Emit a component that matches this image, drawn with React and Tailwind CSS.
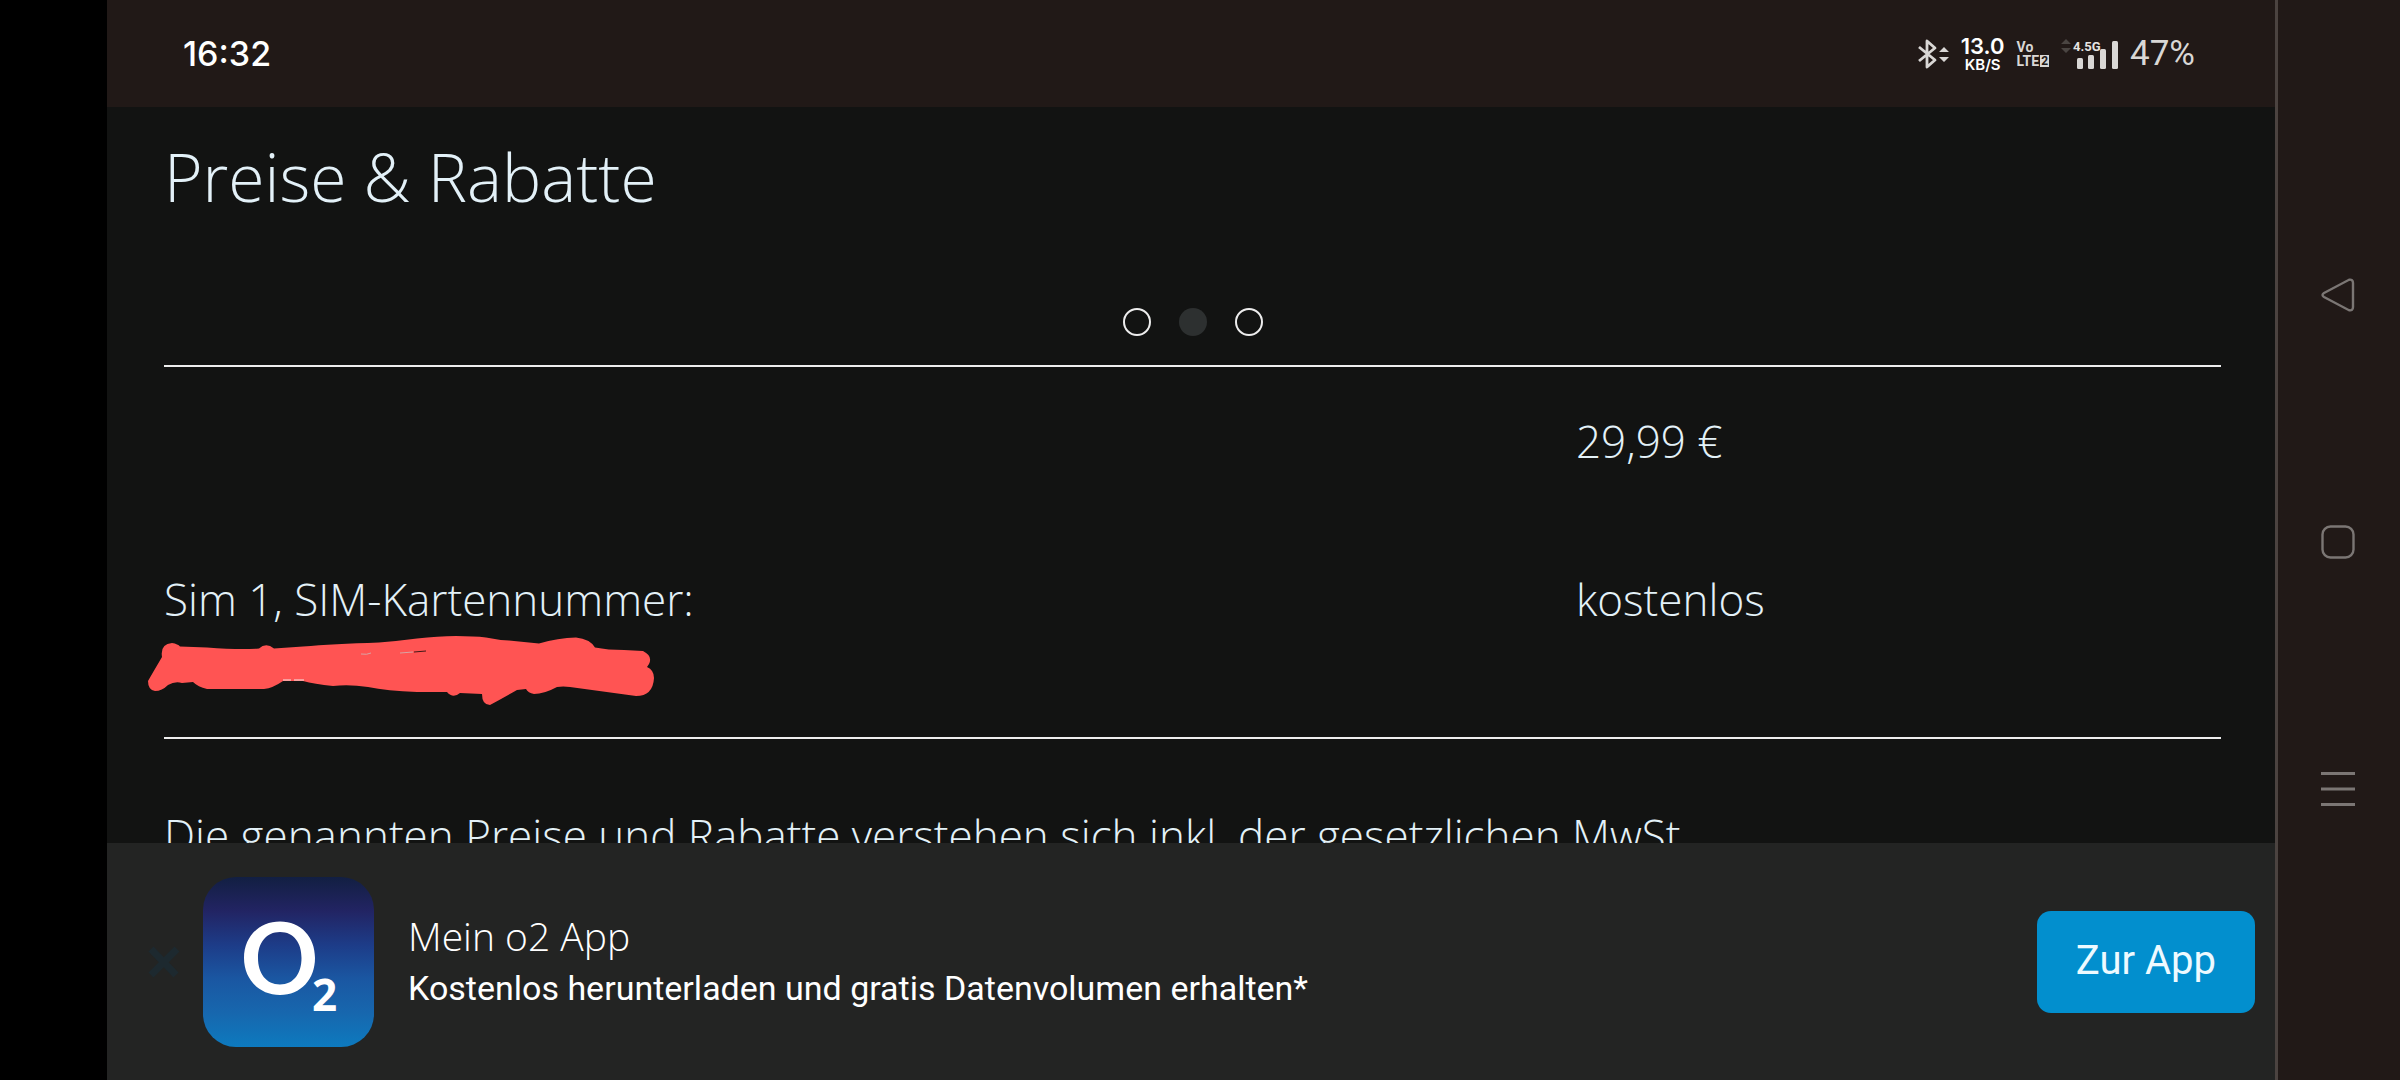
const prices = [
  { label: "", value: "29,99 €" },
  { label: "Sim 1, SIM-Kartennummer:", value: "kostenlos", redacted: true },
];

const slides = [1, 2, 3];
const ACTIVE_SLIDE = 2;

function BluetoothIcon() {
  return (
    <svg width="32" height="32" viewBox="0 0 32 32" fill="none" aria-hidden="true">
      <path
        d="M2 9 18 22 10 29V3l8 7L2 23"
        stroke="#d9d7d5"
        strokeWidth="2.8"
        strokeLinejoin="round"
      />
      <path d="M22 14h10l-5-5zM22 19h10l-5 5z" fill="#d9d7d5" />
    </svg>
  );
}

function SignalIcon() {
  return (
    <svg width="57" height="32" viewBox="0 0 57 32" aria-hidden="true">
      <path d="M0 6h10L5 1zM0 10h10l-5 5z" fill="#4a4542" />
      <g fill="#d9d7d5">
        <rect x="16" y="20" width="6" height="11" rx="1.5" />
        <rect x="27" y="17" width="6" height="14" rx="1.5" />
        <rect x="39" y="11" width="6" height="20" rx="1.5" />
        <rect x="51" y="3" width="6" height="28" rx="1.5" />
      </g>
      <text
        x="12"
        y="13"
        fill="#e6e4e2"
        className="font-['Roboto',sans-serif] text-[13px] font-bold"
      >
        4.5G
      </text>
    </svg>
  );
}

function StatusBar() {
  return (
    <header className="flex h-[107px] shrink-0 items-center justify-between bg-[#211917] pl-[76px] pr-20 font-['Inter',sans-serif]">
      <time className="text-[34px] leading-10 font-medium text-white">16:32</time>
      <div className="flex items-center gap-3 text-[#d9d7d5]">
        <BluetoothIcon />
        <div className="flex flex-col items-center font-semibold text-white">
          <span className="text-[22px] leading-[22px]">13.0</span>
          <span className="text-[15px] leading-4">KB/S</span>
        </div>
        <div className="flex flex-col font-['Roboto',sans-serif] text-[14px] leading-[14px] font-bold">
          <span>Vo</span>
          <span className="flex items-center gap-px">
            LTE
            <span className="bg-[#d9d7d5] px-px text-[12px] leading-3 text-[#211917]">2</span>
          </span>
        </div>
        <SignalIcon />
        <span className="font-['Roboto',sans-serif] text-[35px] leading-10">47%</span>
      </div>
    </header>
  );
}

function SlideDots() {
  return (
    <div className="flex justify-center gap-7">
      {slides.map((n) => (
        <button
          key={n}
          type="button"
          aria-label={`Seite ${n}`}
          className={
            n === ACTIVE_SLIDE
              ? "size-7 rounded-full bg-[#2d3030]"
              : "size-7 rounded-full border-2 border-[#ededed]"
          }
        />
      ))}
    </div>
  );
}

function Scribble() {
  return (
    <svg
      className="mt-[7px] mb-[30px] -ml-4 block"
      width="507"
      height="71"
      viewBox="0 0 507 71"
      aria-hidden="true"
    >
      <path
        fill="#ff5453"
        d="M14 21Q12 8 24 7Q30 8 32 10.5L59 11.5Q92 14 111 12.5Q118 6 126 12.5L155 10.500Q185 8 231 6.500Q250 5 269 2.500Q290 0 308 0Q326 0 338 1.500Q350 4 361 4.500L391 7.500Q410 2 428 1.500Q442 3 447 11.500Q460 14 476 14L495 15Q505 20 501 28L499 31Q506 34 506 42Q505 60 488 60L422 51Q415 50 409 51Q396 58 386 58Q380 57 378 53L369 54Q355 62 342 69Q334 69 334 58L312 57Q305 63 299 56H269Q239 55 220 51Q201 48 185 50Q166 48 155 45H135Q125 52 116 53H59Q50 51 45 46L34 47Q27 45 20 49Q14 55 7 55Q0 54 0 45Q4 38 14 21z"
      />
      <path d="M213 18q6 1 10-1M252 17l13-1" stroke="#d9a3a3" fill="none" />
      <path d="M266 16l12-1" stroke="#401816" fill="none" />
      <path d="M135 44h8M146 44h10" stroke="#f5e8e8" fill="none" />
    </svg>
  );
}

function PriceTable() {
  return (
    <table className="mt-[29px] w-full table-fixed border-y-2 border-[#ededed] text-left">
      <tbody>
        {prices.map((row) => (
          <tr key={row.value} className="align-top">
            <th scope="row" className="h-[159px] pt-11 font-[350]">
              {row.label}
              {row.redacted ? <Scribble /> : null}
            </th>
            <td className="w-[645px] pt-11">{row.value}</td>
          </tr>
        ))}
      </tbody>
    </table>
  );
}

function O2Logo() {
  return (
    <svg className="shrink-0" width="171" height="170" viewBox="0 0 171 170" role="img" aria-label="o2">
      <defs>
        <linearGradient id="o2-bg" x1="0" y1="0" x2="0" y2="1">
          <stop offset="0" stopColor="#121f42" />
          <stop offset="0.2" stopColor="#222463" />
          <stop offset="0.4" stopColor="#1d3c88" />
          <stop offset="0.6" stopColor="#1a57a2" />
          <stop offset="0.8" stopColor="#1767ae" />
          <stop offset="1" stopColor="#0d7abf" />
        </linearGradient>
      </defs>
      <rect width="171" height="170" rx="33" fill="url(#o2-bg)" />
      <path
        fill="#fff"
        fillRule="evenodd"
        d="M77 44.500C98 44.500 112 60 112 81S98 118 77 118S41 102 41 81S56 44.500 77 44.500zM77 55C63 55 55 66 55 81S63 107.500 77 107.500S98.500 96 98.500 81S91 55 77 55z"
      />
      <text x="109" y="134" fill="#fff" className="font-['Open_Sans',sans-serif] text-[44px] font-bold">
        2
      </text>
    </svg>
  );
}

function AppBanner() {
  return (
    <aside className="flex shrink-0 items-center bg-[#232423] pt-[34px] pr-5 pb-[33px] pl-9">
      <button
        type="button"
        aria-label="Schließen"
        className="flex w-[60px] shrink-0 items-center pl-1 text-[#1d292f]"
      >
        <svg width="34" height="32" viewBox="0 0 34 32" aria-hidden="true">
          <path d="M4 3 29 29M30 3 4 29" stroke="currentColor" strokeWidth="7" />
        </svg>
      </button>
      <O2Logo />
      <div className="ml-[34px] flex-1 text-white">
        <p className="font-['Open_Sans',sans-serif] text-[39px] leading-[52px] font-light">Mein o2 App</p>
        <p className="font-['Roboto',sans-serif] text-[34px] leading-[52px]">
          Kostenlos herunterladen und gratis Datenvolumen erhalten*
        </p>
      </div>
      <a
        href="#app"
        className="rounded-[14px] bg-[#028fce] px-[39px] pt-[25px] pb-[27px] font-['Roboto',sans-serif] text-[40px] leading-[50px] text-[#eefaff]"
      >
        Zur App
      </a>
    </aside>
  );
}

function SystemNav() {
  return (
    <nav className="flex w-[125px] shrink-0 flex-col items-center justify-center gap-[213px] border-l-[3px] border-[#4b4340] bg-[#211917] pt-1 pr-[3px] text-[#7b7674]">
      <button type="button" aria-label="Zurück">
        <svg width="34" height="34" viewBox="0 0 34 34" fill="none" stroke="currentColor" strokeWidth="2.4">
          <path d="M3 15 28 1.800Q32 1 32 5V29Q32 33 28 32.200L3 19Q0 17 3 15z" />
        </svg>
      </button>
      <button type="button" aria-label="Startseite">
        <svg width="34" height="34" viewBox="0 0 34 34" fill="none" stroke="currentColor" strokeWidth="2.4">
          <rect x="1.500" y="1.500" width="31" height="31" rx="8" />
        </svg>
      </button>
      <button type="button" aria-label="Letzte Apps">
        <svg width="34" height="34" viewBox="0 0 34 34" fill="none" stroke="currentColor" strokeWidth="3">
          <path d="M0 1.500h34M0 17h34M0 32.500h34" />
        </svg>
      </button>
    </nav>
  );
}

export default function App() {
  return (
    <div className="flex h-screen bg-black pl-[107px]">
      <div className="flex min-w-0 flex-1 flex-col bg-[#121312]">
        <StatusBar />
        <main className="min-h-0 flex-1 overflow-hidden pr-[54px] pl-[57px] font-['Open_Sans',sans-serif] text-[44px] leading-[60px] font-[350] text-[#e3f1f8]">
          <h1 className="mt-6 text-[66px] leading-[90px]">Preise &amp; Rabatte</h1>
          <div className="mt-[87px]">
            <SlideDots />
          </div>
          <PriceTable />
          <p className="mt-[66px]">
            Die genannten Preise und Rabatte verstehen sich inkl. der gesetzlichen MwSt.
          </p>
        </main>
        <AppBanner />
      </div>
      <SystemNav />
    </div>
  );
}
